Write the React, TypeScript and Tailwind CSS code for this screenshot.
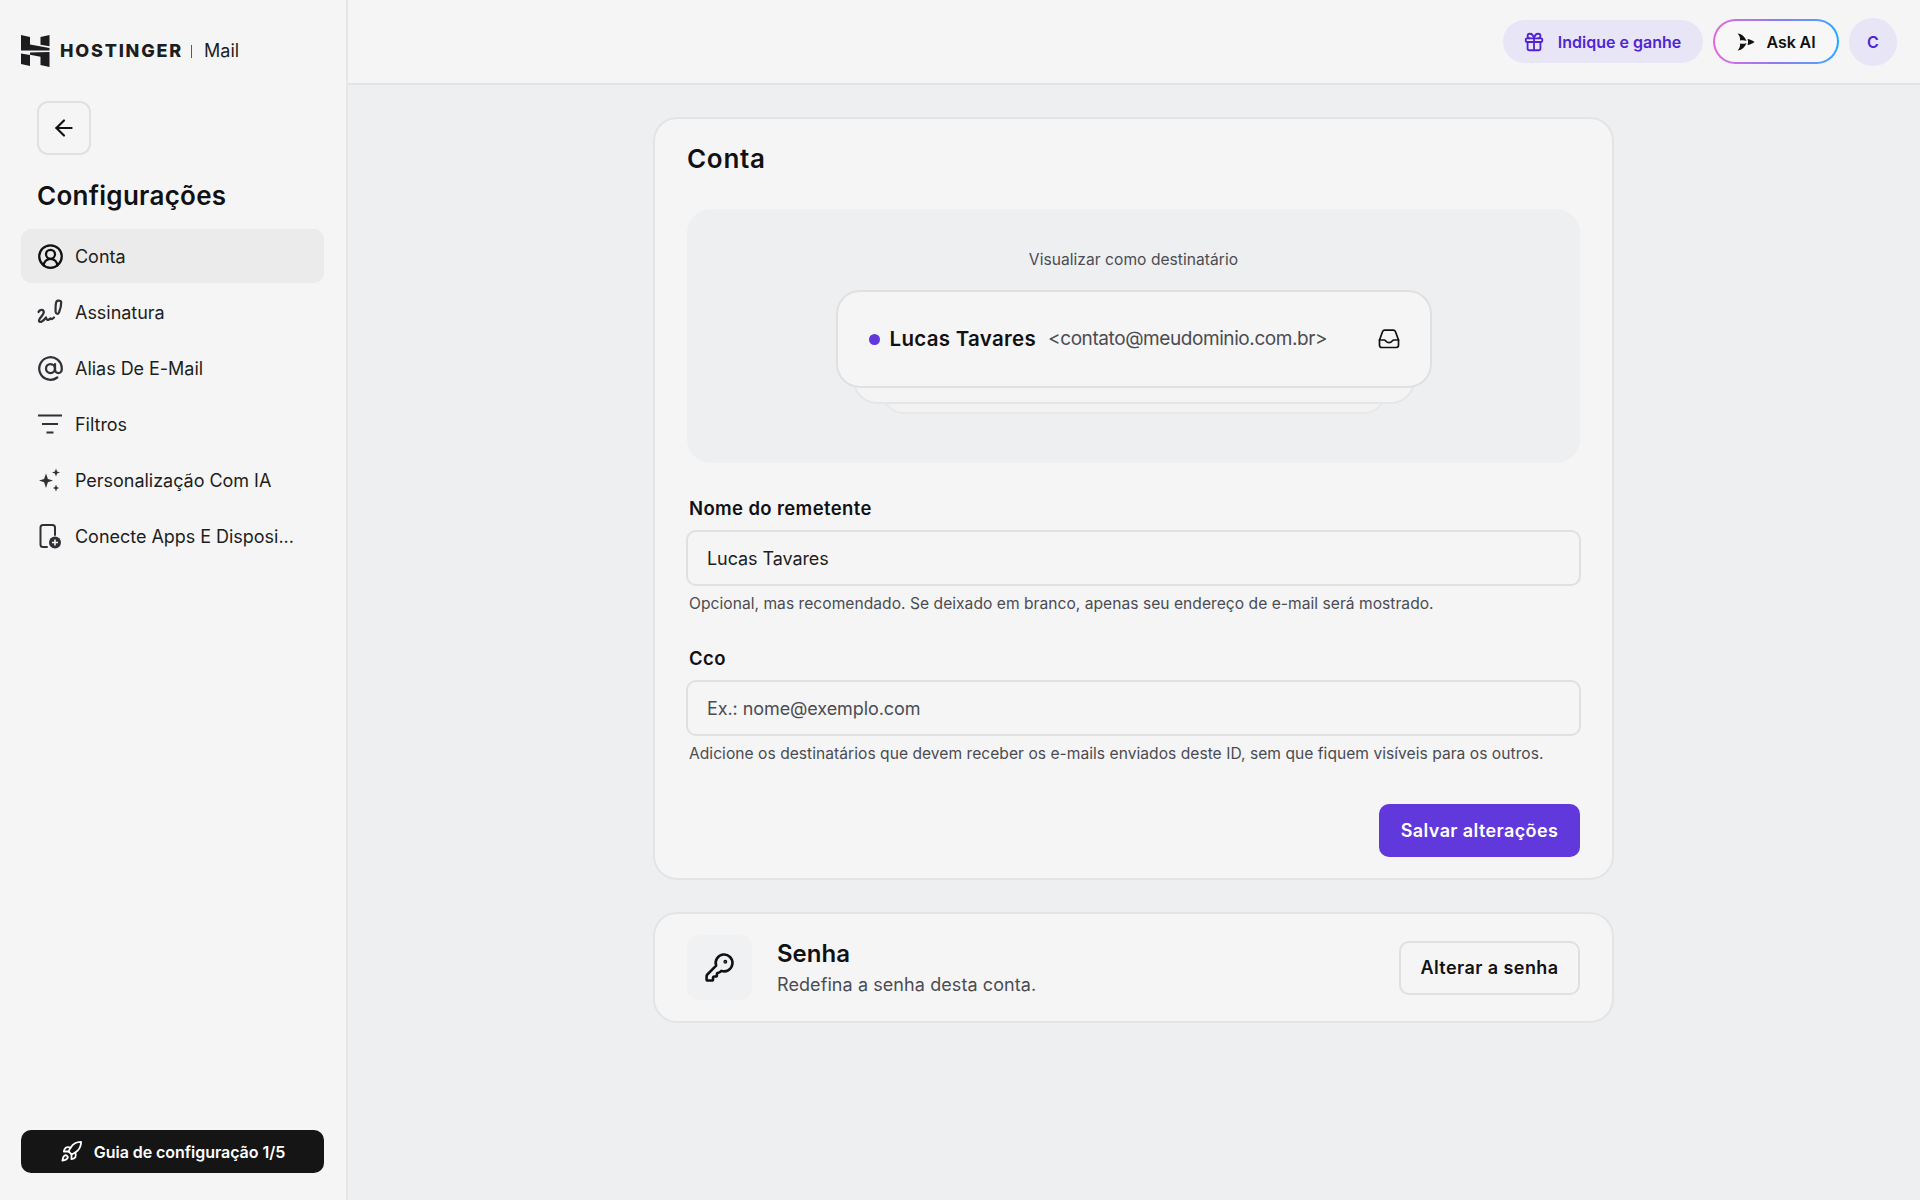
import React from "react";
import { ArrowLeft, CircleUserRound, AtSign, Gift, KeyRound, Rocket } from "lucide-react";

const font = "font-['Inter','Liberation_Sans',sans-serif]";

function Logo() {
  return (
    <svg width="29" height="32" viewBox="0 0 29 32" className="shrink-0" fill="#1d1d1f">
      <path d="M0 0 L9 2 V9.5 L28.5 13 V15.5 H0 Z" />
      <path d="M19.500 2 L28.5 0 V11.3 L19.500 9.700 Z" />
      <path d="M0 18.500 L9 20 V31 L0 29 Z" />
      <path d="M9 17.500 L28.500 17 V32 L19.500 30 V21.800 L9 19.800 Z" />
    </svg>
  );
}

function SignatureIcon() {
  return (
    <svg width="26" height="26" viewBox="0 0 26 26" fill="none" stroke="#303136" strokeWidth="2.2" strokeLinecap="round" strokeLinejoin="round">
      <path d="M1.500 13C2.500 10.500 6.500 10 6.800 13C7 16 1.500 19.500 2 22C2.500 24.500 6.500 22 9 18.500C9.500 20.500 10.500 21.500 12 20.500C13 19.500 13.500 19 14 20C15 20.500 16 19.500 17 18.500" />
      <path d="M19.500 2.500C20.500 1.200 24 1.500 24.200 3C24.300 5 23 11 22 13.500C21 15.500 18.800 15 18.600 13C18.500 10 18.800 4 19.500 2.500Z" />
    </svg>
  );
}

function FilterIcon() {
  return (
    <svg width="26" height="26" viewBox="0 0 26 26" fill="none" stroke="#303136" strokeWidth="2" strokeLinecap="butt">
      <path d="M1 4.500h24M5 13h16M9.500 21.500h7" />
    </svg>
  );
}

function SparkIcon() {
  return (
    <svg width="26" height="26" viewBox="0 0 26 26" fill="#303136">
      <path d="M9 6.500 10.900 12 16 13.500 10.900 15.200 9 21 7.100 15.200 2 13.500 7.100 12Z" />
      <path d="M19 1.500 20.100 4.400 23 5.500 20.100 6.600 19 9.500 17.900 6.600 15 5.500 17.900 4.400Z" />
      <path d="M19 17.500 19.900 20 22 21 19.900 22 19 24.500 18.100 22 16 21 18.100 20Z" />
    </svg>
  );
}

function DeviceAddIcon() {
  return (
    <svg width="26" height="26" viewBox="0 0 26 26" fill="none">
      <path d="M10 24H6a2.500 2.500 0 0 1-2.500-2.500v-17A2.500 2.500 0 0 1 6 2h9.500A2.500 2.500 0 0 1 18 4.500V12" stroke="#303136" strokeWidth="2" strokeLinecap="round" />
      <circle cx="18" cy="19.500" r="6" fill="#303136" />
      <path d="M18 16.500v6M15 19.500h6" stroke="#f5f5f5" strokeWidth="1.600" />
    </svg>
  );
}

function AskAiIcon() {
  return (
    <svg width="18" height="18" viewBox="0 0 18 18" fill="#111">
      <path d="M0.500 0.500C4 0.500 8 3.500 9.500 8C7.500 7 5 7 3 7.500C3.500 5 2.500 2.500 0.500 0.500Z" />
      <path d="M0.500 17.500C4 17.500 8 14.500 9.500 10C7.500 11 5 11 3 10.500C3.500 13 2.500 15.500 0.500 17.500Z" />
      <path d="M17.500 9C15 7.200 12.800 6.200 10.500 6C11.300 7.800 11.300 10.200 10.500 12C12.800 11.800 15 10.800 17.500 9Z" />
    </svg>
  );
}

function InboxIcon() {
  return (
    <svg width="22" height="20" viewBox="0 0 22 20" fill="none" stroke="#111" strokeWidth="1.700" strokeLinejoin="round" strokeLinecap="round">
      <path d="M1.500 11 4.500 2.800C4.900 1.800 5.600 1.200 6.700 1.200h8.600c1.100 0 1.800.6 2.200 1.600l3 8.200v5.300c0 1.200-.9 2.200-2.200 2.200H3.700c-1.300 0-2.200-1-2.200-2.200Z" />
      <path d="M1.500 11h5c1 0 1.500 2.700 4.500 2.700S14.500 11 15.500 11h5" />
    </svg>
  );
}

const nav: [React.ReactNode, string, boolean][] = [
  [<CircleUserRound size={27} strokeWidth={2} color="#111" />, "Conta", true],
  [<SignatureIcon />, "Assinatura", false],
  [<AtSign size={27} strokeWidth={2} color="#303136" />, "Alias De E-Mail", false],
  [<FilterIcon />, "Filtros", false],
  [<SparkIcon />, "Personalização Com IA", false],
  [<DeviceAddIcon />, "Conecte Apps E Disposi...", false],
];

function Field({ label, value, placeholder, help }: { label: string; value?: string; placeholder?: string; help: string }) {
  return (
    <div className="-mx-[1px] flex flex-col">
      <label className="mb-[10px] px-[3px] text-[18.5px] leading-[24px] font-semibold tracking-[0.37px] text-[#111113]">{label}</label>
      <input
        readOnly
        value={value}
        placeholder={placeholder}
        className="h-[56px] w-full rounded-[10px] border-2 border-[#dfe0e2] bg-[#f5f5f6] px-[19px] text-[18px] tracking-[-0.08px] text-[#1d1e20] outline-none placeholder:text-[#4b4c52]"
      />
      <p className="mt-[7px] px-[3px] text-[15.6px] leading-[22px] tracking-[0.03px] text-[#4b4c52]">{help}</p>
    </div>
  );
}

export default function App() {
  return (
    <div className={`${font} flex h-screen w-full overflow-hidden bg-[#eeeff1] text-[#111113]`}>
      <aside className="box-content flex w-[346px] shrink-0 flex-col border-r-2 border-[#e6e6e7] bg-[#f5f5f6]">
        <div className="flex h-[101px] items-start gap-[10px] pl-[21px] pt-[35px]">
          <Logo />
          <div className="flex items-center pt-[6px]">
            <span className="text-[18px] leading-[20px] font-extrabold tracking-[1.8px] text-[#1d1d1f]">HOSTINGER</span>
            <span className="mr-[12px] ml-[8px] h-[13px] w-[1px] bg-[#5a5a5e]" />
            <span className="text-[18px] leading-[20px] tracking-[0px] text-[#1d1d1f]">Mail</span>
          </div>
        </div>
        <div className="pl-[37px]">
          <button className="flex h-[54px] w-[54px] items-center justify-center rounded-[11px] border-2 border-[#e0e0e1]">
            <ArrowLeft size={26} strokeWidth={2} color="#111" />
          </button>
          <h1 className="mt-[25px] mb-[17px] text-[26px] leading-[32px] font-semibold tracking-[0.28px] text-[#111113]">Configurações</h1>
        </div>
        <nav className="flex flex-col gap-[2px] pl-[21px] pr-[22px]">
          {nav.map(([icon, text, active]) => (
            <div key={text} className={`flex h-[54px] items-center rounded-[10px] pl-[16px] ${active ? "bg-[#ebebeb]" : ""}`}>
              <span className="flex w-[38px] shrink-0 items-center">{icon}</span>
              <span className="text-[18px] tracking-[-0.03px] text-[#1d1e20]">{text}</span>
            </div>
          ))}
        </nav>
        <div className="mt-auto pb-[27px] pl-[21px] pr-[22px]">
          <button className="flex h-[43px] w-full items-center justify-center gap-[11px] rounded-[10px] bg-[#151515] text-white">
            <Rocket size={23} strokeWidth={1.9} color="#fff" />
            <span className="text-[16px] font-semibold tracking-[-0.05px]">Guia de configuração 1/5</span>
          </button>
        </div>
      </aside>

      <div className="flex min-w-0 flex-1 flex-col">
        <header className="flex h-[85px] shrink-0 items-center justify-end gap-[10px] border-b-2 border-[#e3e4e5] bg-[#f5f5f6] pr-[23px]">
          <button className="flex h-[43px] w-[200px] items-center justify-center gap-[13px] rounded-full bg-[#e8e6f6] pr-[2px] text-[#5025d1]">
            <Gift size={22} strokeWidth={2} />
            <span className="text-[16px] font-semibold tracking-[0px]">Indique e ganhe</span>
          </button>
          <div className="rounded-full bg-gradient-to-r from-[#e565e0] via-[#8a7bf0] to-[#1ea7ff] p-[2px]">
            <button className="flex h-[41px] w-[122px] items-center justify-center gap-[12px] rounded-full bg-[#f7f7f8] text-[#111]">
              <AskAiIcon />
              <span className="text-[16px] font-semibold tracking-[-0.1px]">Ask AI</span>
            </button>
          </div>
          <div className="flex h-[48px] w-[48px] items-center justify-center rounded-full bg-[#e8e6f6] text-[16px] font-semibold text-[#5025d1]">C</div>
        </header>

        <main className="flex flex-col items-center gap-[32px] pt-[32px] pr-[1px]">
          <section className="flex h-[763px] w-[961px] flex-col rounded-[24px] border-2 border-[#e3e4e5] bg-[#f5f5f6] px-[32px] pt-[23px]">
            <h2 className="text-[26px] leading-[34px] font-semibold tracking-[0.7px] text-[#111113]">Conta</h2>
            <div className="mt-[33px] flex h-[254px] flex-col items-center rounded-[24px] bg-[#eeeff1] pt-[39px]">
              <p className="text-[15.6px] leading-[24px] tracking-[0.03px] text-[#4b4c52]">Visualizar como destinatário</p>
              <div className="relative mt-[18px] w-[596px]">
                <div className="absolute bottom-[-26px] left-[46px] right-[46px] h-[40px] rounded-b-[22px] border-2 border-[#e8e8ea] bg-[#f2f2f3]" />
                <div className="absolute bottom-[-16px] left-[17px] right-[17px] h-[40px] rounded-b-[24px] border-2 border-[#e6e6e8] bg-[#f4f4f5]" />
                <div className="relative flex h-[98px] items-center rounded-[24px] border-2 border-[#e0e0e2] bg-[#f5f5f5] pl-[31px] pr-[30px]">
                  <span className="h-[11px] w-[11px] shrink-0 rounded-full bg-[#6038db]" />
                  <span className="ml-[10px] text-[20.5px] font-semibold tracking-[0.3px] whitespace-nowrap text-[#111113]">Lucas Tavares</span>
                  <span className="ml-[12px] text-[19px] tracking-[-0.42px] whitespace-nowrap text-[#4b4c52]">{"<contato@meudominio.com.br>"}</span>
                  <span className="ml-auto"><InboxIcon /></span>
                </div>
              </div>
            </div>
            <div className="mt-[33px] flex flex-col gap-[31px]">
              <Field label="Nome do remetente" value="Lucas Tavares" help="Opcional, mas recomendado. Se deixado em branco, apenas seu endereço de e-mail será mostrado." />
              <Field label="Cco" placeholder="Ex.: nome@exemplo.com" help="Adicione os destinatários que devem receber os e-mails enviados deste ID, sem que fiquem visíveis para os outros." />
            </div>
            <div className="mt-[39px] flex justify-end">
              <button className="h-[53px] w-[201px] rounded-[10px] bg-[#6038db] text-[18px] font-semibold tracking-[0.4px] text-white">Salvar alterações</button>
            </div>
          </section>

          <section className="flex h-[111px] w-[961px] items-center rounded-[24px] border-2 border-[#e3e4e5] bg-[#f5f5f6] px-[32px]">
            <div className="flex h-[65px] w-[65px] items-center justify-center rounded-[12px] bg-[#f0f1f2]">
              <KeyRound size={31} strokeWidth={2} color="#111" />
            </div>
            <div className="ml-[25px] flex flex-col pt-[2px]">
              <span className="text-[24px] leading-[30px] font-semibold tracking-[0px] text-[#111113]">Senha</span>
              <span className="mt-[3px] text-[18px] leading-[26px] tracking-[0.08px] text-[#4b4c52]">Redefina a senha desta conta.</span>
            </div>
            <button className="ml-auto h-[54px] w-[181px] rounded-[10px] border-2 border-[#e0e0e2] bg-[#f5f5f6] text-[18px] font-semibold tracking-[0.43px] text-[#111113]">Alterar a senha</button>
          </section>
        </main>
      </div>
    </div>
  );
}
